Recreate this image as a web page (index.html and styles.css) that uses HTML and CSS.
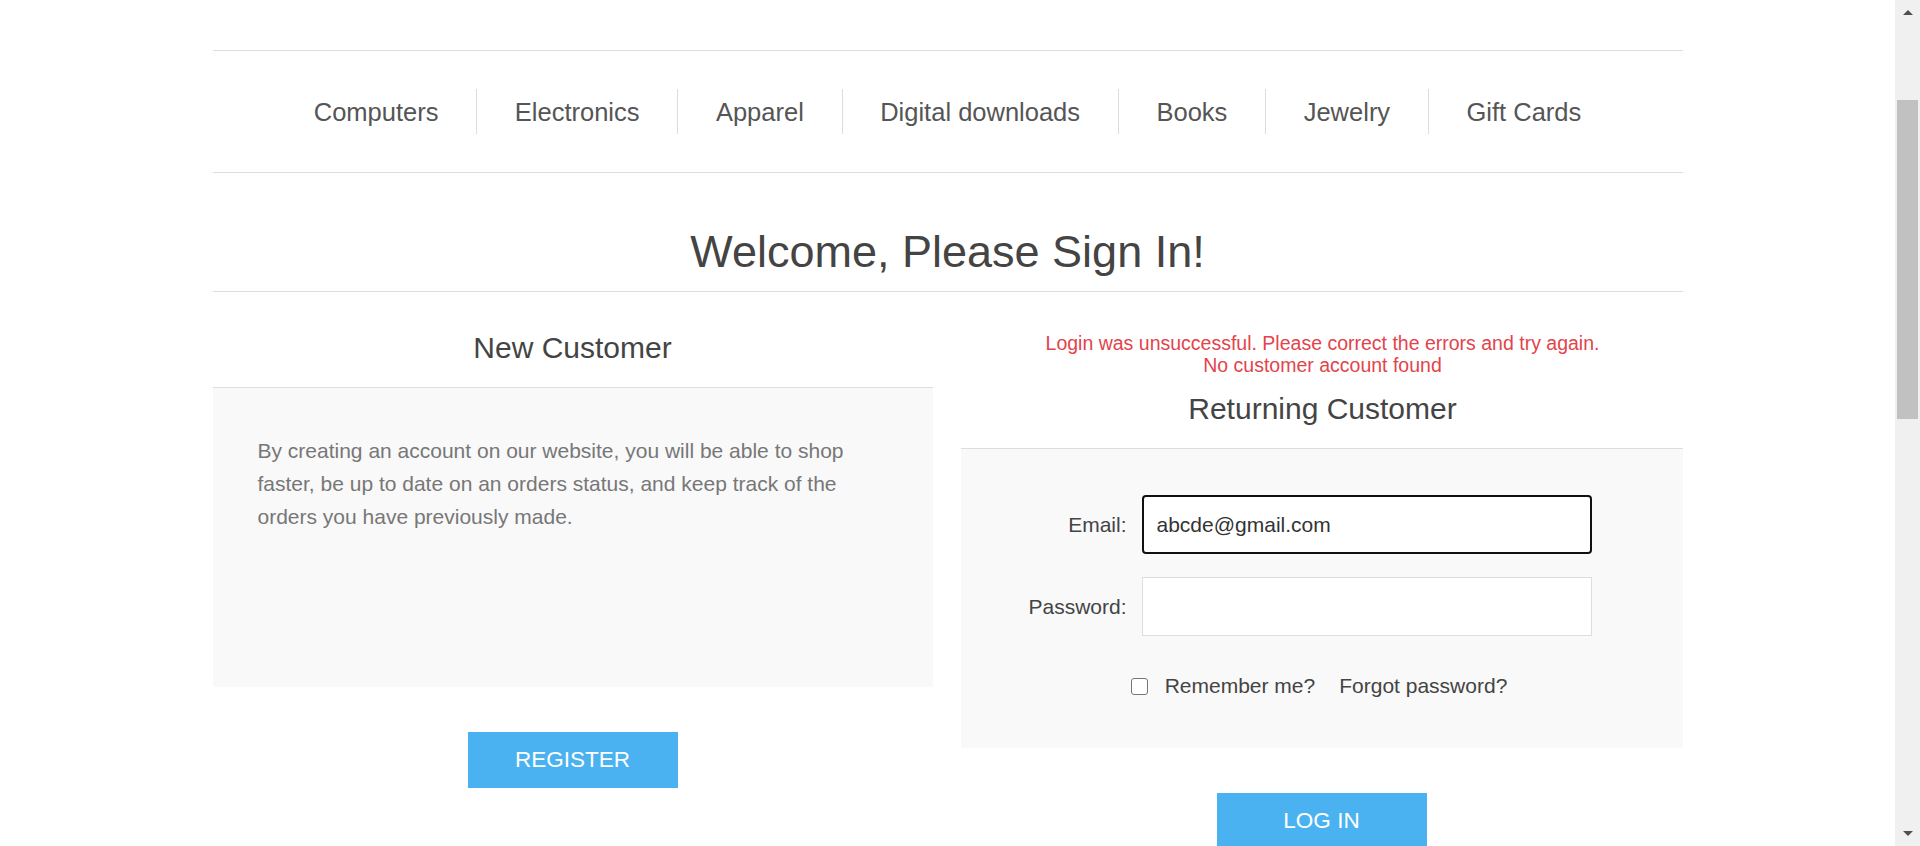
FILE: index.html
```html
<!DOCTYPE html>
<html lang="en">
<head>
<meta charset="utf-8">
<title>Login</title>
<link rel="stylesheet" href="styles.css">
</head>
<body>
<div class="page">
  <div class="master">
    <nav class="header-menu">
      <ul class="top-menu">
        <li><a href="#">Computers</a></li>
        <li><a href="#">Electronics</a></li>
        <li><a href="#">Apparel</a></li>
        <li><a href="#">Digital downloads</a></li>
        <li><a href="#">Books</a></li>
        <li><a href="#">Jewelry</a></li>
        <li><a href="#">Gift Cards</a></li>
      </ul>
    </nav>
    <div class="page-title">
      <h1>Welcome, Please Sign In!</h1>
    </div>
    <div class="customer-blocks">
      <div class="new-wrapper">
        <div class="title">New Customer</div>
        <div class="text">By creating an account on our website, you will be able to shop faster, be up to date on an orders status, and keep track of the orders you have previously made.</div>
        <div class="buttons">
          <button class="button-1" type="button">Register</button>
        </div>
      </div>
      <div class="returning-wrapper">
        <div class="message-error">
          <div>Login was unsuccessful. Please correct the errors and try again.</div>
          <div>No customer account found</div>
        </div>
        <div class="title">Returning Customer</div>
        <div class="form-fields">
          <div class="inputs">
            <label for="Email">Email:</label>
            <input id="Email" class="email focused" type="text" value="abcde@gmail.com">
          </div>
          <div class="inputs">
            <label for="Password">Password:</label>
            <input id="Password" class="password" type="password">
          </div>
          <div class="inputs reversed">
            <input id="RememberMe" class="check" type="checkbox">
            <label for="RememberMe" class="remember">Remember me?</label>
            <a href="#" class="forgot-password">Forgot password?</a>
          </div>
        </div>
        <div class="buttons">
          <button class="button-1" type="button">Log in</button>
        </div>
      </div>
    </div>
  </div>
</div>
<div class="scrollbar">
  <div class="sb-btn"><span class="arrow-up"></span></div>
  <div class="sb-thumb"></div>
  <div class="sb-fill"></div>
  <div class="sb-btn"><span class="arrow-down"></span></div>
</div>
</body>
</html>
```

FILE: styles.css
```css
* {
  box-sizing: border-box;
  margin: 0;
  padding: 0;
}

html, body {
  height: 846px;
  overflow: hidden;
}

body {
  display: flex;
  background: #fff;
  font-family: "Liberation Sans", Arial, sans-serif;
  color: #777;
}

a {
  text-decoration: none;
}

.page {
  flex: 1;
  height: 846px;
  overflow: hidden;
}

.master {
  width: 1470px;
  margin: 0 auto;
  padding-top: 50px;
}

/* top menu */
.header-menu {
  border-top: 1px solid #ddd;
  border-bottom: 1px solid #ddd;
  padding: 38px 0;
}

.top-menu {
  list-style: none;
  display: flex;
  justify-content: center;
}

.top-menu li {
  display: flex;
  align-items: center;
  height: 45px;
  padding: 1px 37.7px 0;
  border-left: 1px solid #ddd;
}

.top-menu li:first-child {
  border-left: none;
}

.top-menu a {
  font-size: 25.5px;
  color: #555;
  white-space: nowrap;
}

/* page title */
.page-title {
  border-bottom: 1px solid #ddd;
  padding: 53px 15px 13px;
  text-align: center;
}

.page-title h1 {
  font-size: 45px;
  line-height: 52px;
  font-weight: normal;
  color: #444;
}

/* blocks */
.customer-blocks {
  display: flex;
  justify-content: space-between;
  padding-top: 38px;
}

.new-wrapper {
  width: 720px;
}

.returning-wrapper {
  width: 722px;
}

.title {
  font-size: 30px;
  line-height: 35px;
  color: #444;
  text-align: center;
  padding-bottom: 22px;
  border-bottom: 1px solid #ddd;
}

.returning-wrapper .title,
.returning-wrapper .message-error {
  padding-left: 2px;
}

.new-wrapper .text {
  min-height: 299px;
  background: #f9f9f9;
  padding: 46px 45px 45px;
  font-size: 21px;
  line-height: 33px;
  color: #777;
}

.buttons {
  display: flex;
  justify-content: center;
  margin-top: 45px;
}

.button-1 {
  width: 210px;
  height: 56px;
  border: none;
  background: #4ab2f1;
  color: #fff;
  font-family: "Liberation Sans", Arial, sans-serif;
  font-size: 22.5px;
  text-transform: uppercase;
  cursor: pointer;
}

.message-error {
  padding-top: 2px;
  margin-bottom: 15px;
  text-align: center;
  font-size: 19.5px;
  line-height: 22px;
  color: #e4434b;
}

.form-fields {
  background: #f9f9f9;
  padding: 46px 0 34px;
}

.inputs {
  display: flex;
  align-items: center;
  margin-bottom: 23px;
}

.inputs label {
  width: 166px;
  margin-right: 15px;
  text-align: right;
  font-size: 21px;
  color: #444;
}

.inputs input[type="text"],
.inputs input[type="password"] {
  width: 450px;
  height: 59px;
  border: 1px solid #ddd;
  border-radius: 0;
  background: #fff;
  padding: 0 14px;
  font-family: "Liberation Sans", Arial, sans-serif;
  font-size: 21px;
  color: #333;
  outline: none;
}

.inputs input.focused {
  border: 2px solid #101010;
  border-radius: 4px;
  padding-left: 13px;
}

.inputs.reversed {
  justify-content: center;
  height: 56px;
  margin-top: -1px;
  margin-bottom: 0;
  padding-right: 5px;
}

.inputs .check {
  appearance: none;
  -webkit-appearance: none;
  width: 17px;
  height: 17px;
  border: 1px solid #767676;
  border-radius: 3px;
  background: #fff;
  margin-right: 17px;
}

.inputs label.remember {
  width: auto;
  margin-right: 24px;
  text-align: left;
}

.forgot-password {
  font-size: 21px;
  color: #444;
}

/* fake browser scrollbar */
.scrollbar {
  width: 25px;
  height: 846px;
  background: #f0f0f0;
  display: flex;
  flex-direction: column;
  align-items: center;
}

.sb-btn {
  width: 25px;
  height: 25px;
  display: flex;
  align-items: center;
  justify-content: center;
}

.arrow-up {
  width: 0;
  height: 0;
  border-left: 5px solid transparent;
  border-right: 5px solid transparent;
  border-bottom: 5px solid #505050;
}

.arrow-down {
  width: 0;
  height: 0;
  border-left: 5px solid transparent;
  border-right: 5px solid transparent;
  border-top: 5px solid #505050;
}

.sb-thumb {
  width: 21px;
  height: 319px;
  margin-top: 75px;
  background: #c1c1c1;
}

.sb-fill {
  flex: 1;
}
```
